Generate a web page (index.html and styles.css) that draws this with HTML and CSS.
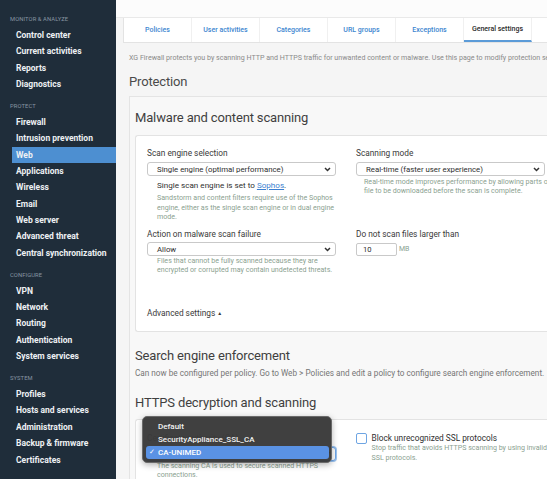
FILE: index.html
```html
<!DOCTYPE html>
<html lang="en">
<head>
<meta charset="utf-8">
<title>Web - General settings</title>
<link rel="stylesheet" href="styles.css">
</head>
<body>
<nav class="sidebar">
  <div class="section first">
    <div class="sec-head">MONITOR &amp; ANALYZE</div>
    <div class="item">Control center</div>
    <div class="item">Current activities</div>
    <div class="item">Reports</div>
    <div class="item">Diagnostics</div>
  </div>
  <div class="section">
    <div class="sec-head">PROTECT</div>
    <div class="item">Firewall</div>
    <div class="item">Intrusion prevention</div>
    <div class="item active">Web</div>
    <div class="item">Applications</div>
    <div class="item">Wireless</div>
    <div class="item">Email</div>
    <div class="item">Web server</div>
    <div class="item">Advanced threat</div>
    <div class="item">Central synchronization</div>
  </div>
  <div class="section">
    <div class="sec-head">CONFIGURE</div>
    <div class="item">VPN</div>
    <div class="item">Network</div>
    <div class="item">Routing</div>
    <div class="item">Authentication</div>
    <div class="item">System services</div>
  </div>
  <div class="section">
    <div class="sec-head">SYSTEM</div>
    <div class="item">Profiles</div>
    <div class="item">Hosts and services</div>
    <div class="item">Administration</div>
    <div class="item">Backup &amp; firmware</div>
    <div class="item">Certificates</div>
  </div>
</nav>
<main class="main">
  <div class="topstrip"></div>
  <div class="main-inner">
    <div class="tabs">
      <div class="tab">Policies</div>
      <div class="tab">User activities</div>
      <div class="tab">Categories</div>
      <div class="tab">URL groups</div>
      <div class="tab">Exceptions</div>
      <div class="tab active">General settings</div>
      <div class="tab rest"></div>
    </div>
    <div class="content">
      <p class="page-desc">XG Firewall protects you by scanning HTTP and HTTPS traffic for unwanted content or malware. Use this page to modify protection settings.</p>
      <h1 class="page-title">Protection</h1>
      <div class="panel">
        <h2 class="sec-title first-title">Malware and content scanning</h2>
        <div class="card card-malware">
          <div class="row">
            <div class="field">
              <div class="label">Scan engine selection</div>
              <div class="select"><span>Single engine (optimal performance)</span><svg class="chev" width="7" height="5" viewBox="0 0 7 5"><path d="M1 1 L3.5 3.5 L6 1" fill="none" stroke="#333" stroke-width="1.5"/></svg></div>
              <div class="sub">
                <div class="note">Single scan engine is set to <a class="link" href="#">Sophos</a>.</div>
                <div class="help help-a">Sandstorm and content filters require use of the Sophos<br>engine, either as the single scan engine or in dual engine<br>mode.</div>
              </div>
            </div>
            <div class="field">
              <div class="label">Scanning mode</div>
              <div class="select"><span>Real-time (faster user experience)</span><svg class="chev" width="7" height="5" viewBox="0 0 7 5"><path d="M1 1 L3.5 3.5 L6 1" fill="none" stroke="#333" stroke-width="1.5"/></svg></div>
              <div class="help help-b">Real-time mode improves performance by allowing parts of the<br>file to be downloaded before the scan is complete.</div>
            </div>
          </div>
          <div class="row row2">
            <div class="field">
              <div class="label">Action on malware scan failure</div>
              <div class="select sel2"><span>Allow</span><svg class="chev" width="7" height="5" viewBox="0 0 7 5"><path d="M1 1 L3.5 3.5 L6 1" fill="none" stroke="#333" stroke-width="1.5"/></svg></div>
              <div class="help help-c">Files that cannot be fully scanned because they are<br>encrypted or corrupted may contain undetected threats.</div>
            </div>
            <div class="field">
              <div class="label">Do not scan files larger than</div>
              <div class="size-row"><div class="num-input">10</div><span class="unit">MB</span></div>
            </div>
          </div>
          <div class="advanced">Advanced settings <span class="tri">&#9650;</span></div>
        </div>
        <h2 class="sec-title search-title">Search engine enforcement</h2>
        <p class="sec-desc">Can now be configured per policy. Go to Web &gt; Policies and edit a policy to configure search engine enforcement.</p>
        <h2 class="sec-title https-title">HTTPS decryption and scanning</h2>
        <div class="card card-https">
          <div class="row">
            <div class="field">
              <div class="label">Certificate authority (CA)</div>
              <div class="select focus"><span>CA-UNIMED</span><svg class="chev" width="7" height="5" viewBox="0 0 7 5"><path d="M1 1 L3.5 3.5 L6 1" fill="none" stroke="#333" stroke-width="1.5"/></svg></div>
              <div class="help help-c">The scanning CA is used to secure scanned HTTPS<br>connections.</div>
            </div>
            <div class="field check-field">
              <div class="checkbox"></div>
              <div class="check-text">
                <div class="check-label">Block unrecognized SSL protocols</div>
                <div class="help help-d">Stop traffic that avoids HTTPS scanning by using invalid<br>SSL protocols.</div>
              </div>
            </div>
          </div>
          <div class="menu">
            <div class="menu-item">Default</div>
            <div class="menu-item">SecurityAppliance_SSL_CA</div>
            <div class="menu-item selected"><span class="check">&#10003;</span>CA-UNIMED</div>
          </div>
        </div>
      </div>
    </div>
  </div>
</main>
</body>
</html>
```

FILE: styles.css
```css
* { box-sizing: border-box; }
html, body { margin: 0; padding: 0; }
body {
  width: 547px;
  height: 479px;
  overflow: hidden;
  display: flex;
  font-family: Roboto, "Liberation Sans", sans-serif;
  background: #f4f4f4;
}

/* Sidebar */
.sidebar {
  width: 116px;
  flex: none;
  height: 479px;
  background: #1f2d3a;
  padding-top: 14px;
}
.section { margin-top: 8.6px; }
.section.first { margin-top: 0; }
.sec-head {
  height: 10px;
  line-height: 10px;
  margin-bottom: 2.8px;
  padding-left: 10px;
  font-size: 5.8px;
  color: #8896a3;
  letter-spacing: 0.1px;
}
.item {
  height: 16.4px;
  line-height: 16.4px;
  margin-left: 12px;
  padding-left: 4px;
  font-size: 8.5px;
  font-weight: 700;
  color: #eef1f4;
  white-space: nowrap;
}
.item.active { background: #4d8fd1; }

/* Main */
.main {
  flex: 1;
  min-width: 0;
  overflow: hidden;
  background: #f5f5f5;
}
.topstrip {
  height: 18px;
  background: #fcfcfc;
  border-bottom: 1px solid #e9e9e9;
}
.main-inner { padding-left: 7px; }
.tabs {
  display: flex;
  height: 25px;
  background: #fff;
  border: 1px solid #e3e3e3;
  border-top: none;
  border-right: none;
  width: 440px;
}
.tab {
  width: 68px;
  flex: none;
  text-align: center;
  line-height: 24px;
  font-size: 7px;
  font-weight: 500;
  color: #3d86d0;
  border-right: 1px solid #f0f0f0;
  white-space: nowrap;
}
.tab.active {
  color: #2b2b2b;
  border-bottom: 2px solid #5b9bd8;
  line-height: 22px;
}
.tab.rest { flex: 1; border-right: none; }

.content { padding-left: 6px; }
.page-desc {
  margin: 10px 0 0;
  height: 10px;
  line-height: 10px;
  font-size: 7.1px;
  color: #8a8a8a;
  white-space: nowrap;
}
.page-title {
  margin: 10px 0 5px;
  height: 18px;
  line-height: 18px;
  font-size: 13px;
  font-weight: 400;
  letter-spacing: -0.15px;
  color: #4a4a4a;
}
.panel {
  background: #f8f8f8;
  border: 1px solid #e4e4e4;
  border-right: none;
  border-bottom: none;
  padding-left: 5px;
  width: 440px;
  height: 400px;
}
.sec-title {
  margin: 0;
  height: 18px;
  line-height: 18px;
  font-size: 13px;
  font-weight: 400;
  letter-spacing: -0.15px;
  color: #3f3f3f;
  white-space: nowrap;
}
.first-title { margin-top: 12px; margin-bottom: 8px; }
.search-title { margin-top: 15px; }
.sec-desc {
  margin: 3px 0 0;
  height: 10px;
  line-height: 10px;
  font-size: 8.2px;
  color: #757575;
  white-space: nowrap;
}
.https-title { margin-top: 15.7px; margin-bottom: 7.6px; }

.card {
  background: #fff;
  border: 1px solid #e3e3e3;
  border-right: none;
  border-radius: 3px 0 0 3px;
  padding-left: 11px;
}
.card-malware { height: 197px; padding-top: 12px; }
.card-https { height: 80px; padding-top: 12.7px; position: relative; }

.row { display: flex; gap: 20px; }
.row2 { margin-top: 7.5px; }
.field { width: 189px; flex: none; }
.label {
  height: 10px;
  line-height: 10px;
  font-size: 8.3px;
  color: #3a3a3a;
  white-space: nowrap;
}
.select {
  margin-top: 4px;
  height: 14px;
  border: 1px solid #c9c9c9;
  border-radius: 3px;
  background: #fff;
  display: flex;
  align-items: center;
  justify-content: space-between;
  padding: 0 4px 0 9px;
  font-size: 7.8px;
  color: #2e2e2e;
  white-space: nowrap;
}
.sel2 { margin-top: 3px; }
.select.focus { border-color: #6fa6e6; box-shadow: 0 0 0 1px #9cc3ef; }
.chev { flex: none; }
.sub { padding-left: 10px; }
.note {
  margin-top: 3.5px;
  height: 11px;
  line-height: 11px;
  font-size: 8.1px;
  color: #2f2f2f;
  white-space: nowrap;
}
.link { color: #3b7fd0; text-decoration: underline; }
.help {
  font-size: 7.1px;
  color: #8b9f91;
  white-space: nowrap;
}
.help-a { margin-top: 2.5px; line-height: 9.5px; }
.help-b { padding-left: 8px; margin-top: 0.5px; line-height: 9.5px; }
.help-c { padding-left: 10px; line-height: 9.4px; }
.help-d { line-height: 10px; }

.size-row { display: flex; align-items: center; margin-top: 3.5px; }
.num-input {
  width: 41px;
  height: 13px;
  border: 1px solid #c9c9c9;
  border-radius: 2px;
  font-size: 7.6px;
  line-height: 11px;
  padding-left: 6px;
  color: #2e2e2e;
}
.unit { margin-left: 2px; font-size: 7px; color: #8b9f91; }

.advanced {
  margin-top: 33.5px;
  height: 11px;
  line-height: 11px;
  font-size: 8.3px;
  color: #3a3a3a;
}
.tri { font-size: 5px; vertical-align: 1px; }

.check-field { display: flex; gap: 5px; }
.checkbox {
  width: 10.5px;
  height: 10.5px;
  flex: none;
  margin-top: 0.5px;
  border: 1.3px solid #6ea5e3;
  border-radius: 2px;
  background: #fff;
}
.check-label {
  height: 10px;
  line-height: 10px;
  font-size: 8.3px;
  color: #2f2f2f;
  white-space: nowrap;
}

/* Dropdown menu overlay */
.menu {
  position: absolute;
  left: 6px;
  top: -4px;
  width: 190px;
  height: 47px;
  background: rgba(58, 58, 58, 0.97);
  border: 1px solid #6a6a6a;
  border-radius: 5px;
  padding-top: 2.5px;
  box-shadow: 0 2px 6px rgba(0,0,0,0.3);
}
.menu-item {
  position: relative;
  height: 13px;
  line-height: 13px;
  padding-left: 15px;
  font-size: 8px;
  font-weight: 500;
  color: #f2f2f2;
  white-space: nowrap;
}
.menu-item.selected {
  margin: 0 2px 0 3px;
  padding-left: 12px;
  background: #5a92e4;
  border-radius: 3px;
  color: #fff;
}
.check {
  position: absolute;
  left: 3px;
  top: 0;
  font-size: 7px;
}
```
